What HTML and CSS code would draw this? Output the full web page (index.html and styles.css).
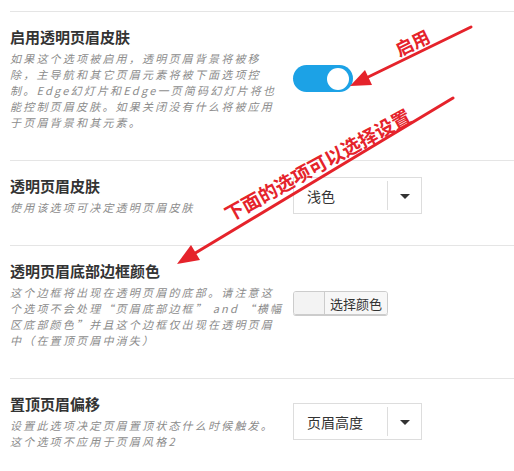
FILE: index.html
```html
<!DOCTYPE html>
<html lang="zh-CN">
<head>
<meta charset="utf-8">
<title>透明页眉设置</title>
<link rel="stylesheet" href="styles.css">
</head>
<body>
<div class="page">
  <div class="options">
    <div class="row">
      <div class="info">
        <div class="title">启用透明页眉皮肤</div>
        <div class="desc">如果这个选项被启用，透明页眉背景将被移<br>除，主导航和其它页眉元素将被下面选项控<br>制。Edge幻灯片和Edge一页简码幻灯片将也<br>能控制页眉皮肤。如果关闭没有什么将被应用<br>于页眉背景和其元素。</div>
      </div>
      <div class="control">
        <div class="toggle"><span class="knob"></span></div>
      </div>
    </div>
    <div class="row">
      <div class="info">
        <div class="title">透明页眉皮肤</div>
        <div class="desc">使用该选项可决定透明页眉皮肤</div>
      </div>
      <div class="control">
        <div class="select"><span class="value">浅色</span><span class="caret-box"><span class="caret"></span></span></div>
      </div>
    </div>
    <div class="row">
      <div class="info">
        <div class="title">透明页眉底部边框颜色</div>
        <div class="desc">这个边框将出现在透明页眉的底部。请注意这<br>个选项不会处理“页眉底部边框” and “横幅<br>区底部颜色”并且这个边框仅出现在透明页眉<br>中（在置顶页眉中消失）</div>
      </div>
      <div class="control">
        <div class="picker"><span class="swatch"></span><span class="pick-btn">选择颜色</span></div>
      </div>
    </div>
    <div class="row">
      <div class="info">
        <div class="title">置顶页眉偏移</div>
        <div class="desc">设置此选项决定页眉置顶状态什么时候触发。<br>这个选项不应用于页眉风格2</div>
      </div>
      <div class="control">
        <div class="select"><span class="value">页眉高度</span><span class="caret-box"><span class="caret"></span></span></div>
      </div>
    </div>
  </div>

  <svg class="arrows" width="514" height="471" viewBox="0 0 514 471" aria-hidden="true">
    <line x1="471" y1="27" x2="362" y2="80" stroke="#e5232b" stroke-width="3" stroke-linecap="round"/>
    <polygon points="350,86 365,70 372,85" fill="#e5232b"/>
    <line x1="453" y1="98" x2="192" y2="255" stroke="#e5232b" stroke-width="3" stroke-linecap="round"/>
    <polygon points="177,264 191,245 200,260" fill="#e5232b"/>
  </svg>
  <div class="note note-on">启用</div>
  <div class="note note-below">下面的选项可以选择设置</div>
</div>
</body>
</html>
```

FILE: styles.css
```css
html, body {
  margin: 0;
  padding: 0;
  background: #ffffff;
}

body {
  font-family: "Noto Sans CJK SC", "Noto Sans", "Liberation Sans", sans-serif;
  color: #333333;
  overflow: hidden;
}

.page {
  position: relative;
  width: 514px;
  height: 471px;
  overflow: hidden;
}

.options {
  padding-top: 11px;
  margin-left: 10px;
}

.row {
  display: grid;
  grid-template-columns: 283px 1fr;
  align-items: center;
  border-top: 1px solid #e5e5e5;
  padding: 15px 0 30px;
}

.title {
  font-size: 15px;
  line-height: 20px;
  font-weight: 700;
  color: #333333;
  margin-bottom: 3px;
}

.desc {
  font-size: 11px;
  line-height: 16px;
  font-style: italic;
  color: #8c8c8c;
  letter-spacing: 2.2px;
  white-space: nowrap;
}

.control {
  display: flex;
  align-items: center;
}

.toggle {
  width: 60px;
  height: 27px;
  border-radius: 14px;
  background: #1ca2e6;
  display: flex;
  align-items: center;
  justify-content: flex-end;
  padding-right: 4px;
  box-sizing: border-box;
}

.knob {
  width: 22px;
  height: 22px;
  border-radius: 50%;
  background: #ffffff;
}

.select {
  width: 129px;
  height: 37px;
  box-sizing: border-box;
  border: 1px solid #dddddd;
  display: flex;
  align-items: center;
  background: #ffffff;
}

.value {
  flex: 1;
  padding-left: 13px;
  font-size: 14px;
  color: #333333;
}

.caret-box {
  width: 33px;
  height: 29px;
  border-left: 1px solid #dddddd;
  display: flex;
  align-items: center;
  justify-content: center;
}

.caret {
  width: 0;
  height: 0;
  border-left: 5px solid transparent;
  border-right: 5px solid transparent;
  border-top: 5px solid #333333;
  margin-top: 1px;
}

.picker {
  display: flex;
  height: 24px;
  box-sizing: border-box;
  border: 1px solid #cccccc;
  border-radius: 3px;
  box-shadow: 0 1px 0 #cccccc;
  overflow: hidden;
  margin-top: -3px;
}

.swatch {
  width: 30px;
  background: #f3f3f3;
}

.pick-btn {
  display: flex;
  align-items: center;
  padding: 0 5px;
  border-left: 1px solid #cccccc;
  background: #f7f7f7;
  font-size: 13px;
  color: #333333;
}

.arrows {
  position: absolute;
  left: 0;
  top: 0;
  pointer-events: none;
}

.note {
  position: absolute;
  color: #e5232b;
  font-weight: 700;
  white-space: nowrap;
  transform: translate(-50%, -50%) rotate(var(--angle));
  line-height: 1;
}

.note-on {
  left: 412px;
  top: 42px;
  font-size: 18px;
  --angle: -26deg;
}

.note-below {
  left: 317px;
  top: 164px;
  font-size: 19px;
  --angle: -29deg;
}
```
